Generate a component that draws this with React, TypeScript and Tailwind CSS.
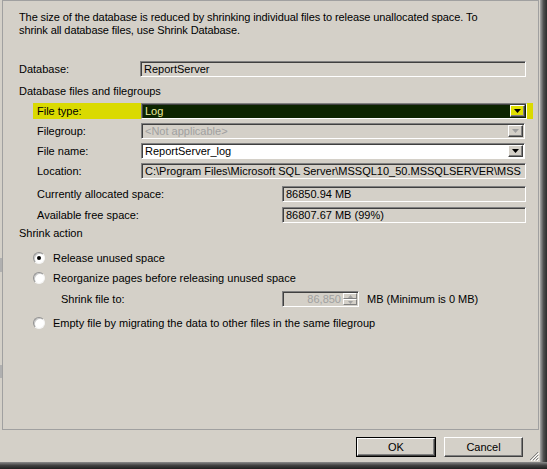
import React from 'react'

const sunken =
  'border border-t-[#808080] border-l-[#808080] border-b-white border-r-white shadow-[inset_1px_1px_0_#404040]'

function ArrowButton({ tone }: { tone: 'normal' | 'disabled' | 'yellow' }) {
  const bg = tone === 'yellow' ? 'bg-[#e0e000]' : 'bg-[#d4d0c8]'
  const fill = tone === 'disabled' ? '#a0a0a0' : '#000000'
  return (
    <div
      className={`${bg} w-[15px] h-full shrink-0 flex items-center justify-center border border-t-white border-l-white border-b-[#404040] border-r-[#404040] shadow-[inset_-1px_-1px_0_#808080]`}
    >
      <svg width="7" height="4" viewBox="0 0 7 4">
        <path d="M0 0h7L3.5 4z" fill={fill} />
      </svg>
    </div>
  )
}

function TextBox({ value, white }: { value: string; white?: boolean }) {
  return (
    <div
      className={`${sunken} ${white ? 'bg-white' : 'bg-[#d4d0c8]'} flex-1 min-w-0 h-[16px] flex items-center pl-[3px] overflow-hidden whitespace-nowrap`}
    >
      {value}
    </div>
  )
}

function Combo({ value, tone }: { value: string; tone: 'normal' | 'disabled' | 'yellow' }) {
  const box =
    tone === 'yellow'
      ? 'bg-[#0c2400] text-[#ecec9c]'
      : tone === 'disabled'
        ? 'bg-[#d4d0c8] text-[#a0a0a0]'
        : 'bg-white text-black'
  return (
    <div className={`${sunken} ${box} flex-1 h-[16px] flex items-center overflow-hidden`}>
      <div className="flex-1 pl-[3px] whitespace-nowrap overflow-hidden">{value}</div>
      <div className="h-full py-[1px] pr-[1px]">
        <ArrowButton tone={tone} />
      </div>
    </div>
  )
}

function Radio({ checked, label }: { checked?: boolean; label: string }) {
  return (
    <div className="flex items-center h-[16px]">
      <div className="w-[12px] h-[12px] rounded-full bg-white border border-t-[#909090] border-l-[#909090] border-b-[#f4f4f4] border-r-[#f4f4f4] shadow-[inset_1px_1px_0_#c8c8c8] flex items-center justify-center">
        {checked && <div className="w-[4px] h-[4px] rounded-full bg-black" />}
      </div>
      <span className="ml-[8px]">{label}</span>
    </div>
  )
}

function Button({ label, isDefault }: { label: string; isDefault?: boolean }) {
  return (
    <div className={`h-[20px] ${isDefault ? 'w-[80px] border border-black' : 'w-[79px]'}`}>
      <div className="w-full h-full bg-[#d4d0c8] border border-t-white border-l-white border-b-[#404040] border-r-[#404040] shadow-[inset_-1px_-1px_0_#808080] flex items-center justify-center">
        {label}
      </div>
    </div>
  )
}

export default function App() {
  return (
    <div className="w-[547px] h-[469px] bg-[#d4d0c8] flex flex-col overflow-hidden font-['Liberation_Sans',Arial,sans-serif] text-[11px] leading-[13px] text-black">
      <div className="flex h-[462px]">
        <div className="w-[540px] flex flex-col">
          <div className="flex h-[430px]">
            {/* left gutter with scrollbar remnants */}
            <div className="w-[2px] flex flex-col">
              <div className="h-[258px]" />
              <div className="h-[14px] bg-[#b0b0b0]" />
              <div className="h-[93px]" />
              <div className="h-[13px] bg-[#b0b0b0]" />
            </div>
            <div className="w-[537px] border border-[#a0a0a0] pl-[16px] pr-[12px] pt-[10px] flex flex-col">
              <p className="tracking-[-0.1px]">
                The size of the database is reduced by shrinking individual files to release unallocated space. To
                <br />
                shrink all database files, use Shrink Database.
              </p>

              <div className="flex items-center h-[16px] mt-[24px]">
                <div className="w-[121px]">Database:</div>
                <TextBox value="ReportServer" />
              </div>

              <div className="mt-[8px]">Database files and filegroups</div>

              <div className="pl-[18px] flex flex-col">
                <div className="flex items-center h-[16px] mt-[5px] bg-[#dada00] -ml-[4px] pl-[4px] -mr-[7px] pr-[6px]">
                  <div className="w-[104px]">File type:</div>
                  <Combo value="Log" tone="yellow" />
                </div>
                <div className="flex items-center h-[16px] mt-[4px] mr-[1px]">
                  <div className="w-[104px]">Filegroup:</div>
                  <Combo value="<Not applicable>" tone="disabled" />
                </div>
                <div className="flex items-center h-[16px] mt-[4px] mr-[1px]">
                  <div className="w-[104px]">File name:</div>
                  <Combo value="ReportServer_log" tone="normal" />
                </div>
                <div className="flex items-center h-[16px] mt-[4px]">
                  <div className="w-[104px]">Location:</div>
                  <TextBox value="C:\Program Files\Microsoft SQL Server\MSSQL10_50.MSSQLSERVER\MSS" />
                </div>

                <div className="flex items-center h-[16px] mt-[7px]">
                  <div className="w-[245px]">Currently allocated space:</div>
                  <TextBox value="86850.94 MB" />
                </div>
                <div className="flex items-center h-[16px] mt-[5px]">
                  <div className="w-[245px]">Available free space:</div>
                  <TextBox value="86807.67 MB (99%)" />
                </div>
              </div>

              <div className="mt-[4px]">Shrink action</div>

              <div className="pl-[14px] flex flex-col">
                <div className="mt-[10px]">
                  <Radio checked label="Release unused space" />
                </div>
                <div className="mt-[4px]">
                  <Radio label="Reorganize pages before releasing unused space" />
                </div>
                <div className="flex items-center h-[16px] mt-[5px] pl-[28px]">
                  <div className="w-[221px]">Shrink file to:</div>
                  <div className={`${sunken} bg-[#d4d0c8] w-[77px] h-[16px] flex items-center`}>
                    <div className="flex-1 text-right pr-[2px] text-[#a0a0a0]">86,850</div>
                    <div className="w-[15px] h-full py-[1px] pr-[1px] flex flex-col">
                      <div className="flex-1 bg-[#d4d0c8] border-t border-l border-white border-b border-r border-b-[#808080] border-r-[#808080] flex items-center justify-center">
                        <svg width="5" height="3" viewBox="0 0 5 3">
                          <path d="M0 3h5L2.5 0z" fill="#a0a0a0" />
                        </svg>
                      </div>
                      <div className="flex-1 bg-[#d4d0c8] border-t border-l border-white border-b border-r border-b-[#808080] border-r-[#808080] flex items-center justify-center">
                        <svg width="5" height="3" viewBox="0 0 5 3">
                          <path d="M0 0h5L2.5 3z" fill="#a0a0a0" />
                        </svg>
                      </div>
                    </div>
                  </div>
                  <span className="ml-[8px]">MB (Minimum is 0 MB)</span>
                </div>
                <div className="mt-[8px]">
                  <Radio label="Empty file by migrating the data to other files in the same filegroup" />
                </div>
              </div>
            </div>
            <div className="w-[1px]" />
          </div>

          {/* button bar */}
          <div className="flex-1 flex items-start pt-[7px] pr-[1px]">
            <div className="flex-1" />
            <Button label="OK" isDefault />
            <div className="w-[8px]" />
            <Button label="Cancel" />
            <div className="ml-[6px] self-end mb-[1px] w-[10px] h-[10px]">
              <svg width="10" height="10" viewBox="0 0 10 10">
                <path d="M9 1L1 9M9 4L4 9M9 7L7 9" stroke="#808080" strokeWidth="1" />
                <path d="M10 2L2 10M10 5L5 10M10 8L8 10" stroke="#ffffff" strokeWidth="1" />
              </svg>
            </div>
          </div>
        </div>
        <div className="flex-1 bg-gradient-to-r from-[#a8a8a8] via-[#505050] to-[#2c2c2c]" />
      </div>
      <div className="flex-1 bg-gradient-to-b from-[#8c8c8c] via-[#404040] to-[#202020]" />
    </div>
  )
}
